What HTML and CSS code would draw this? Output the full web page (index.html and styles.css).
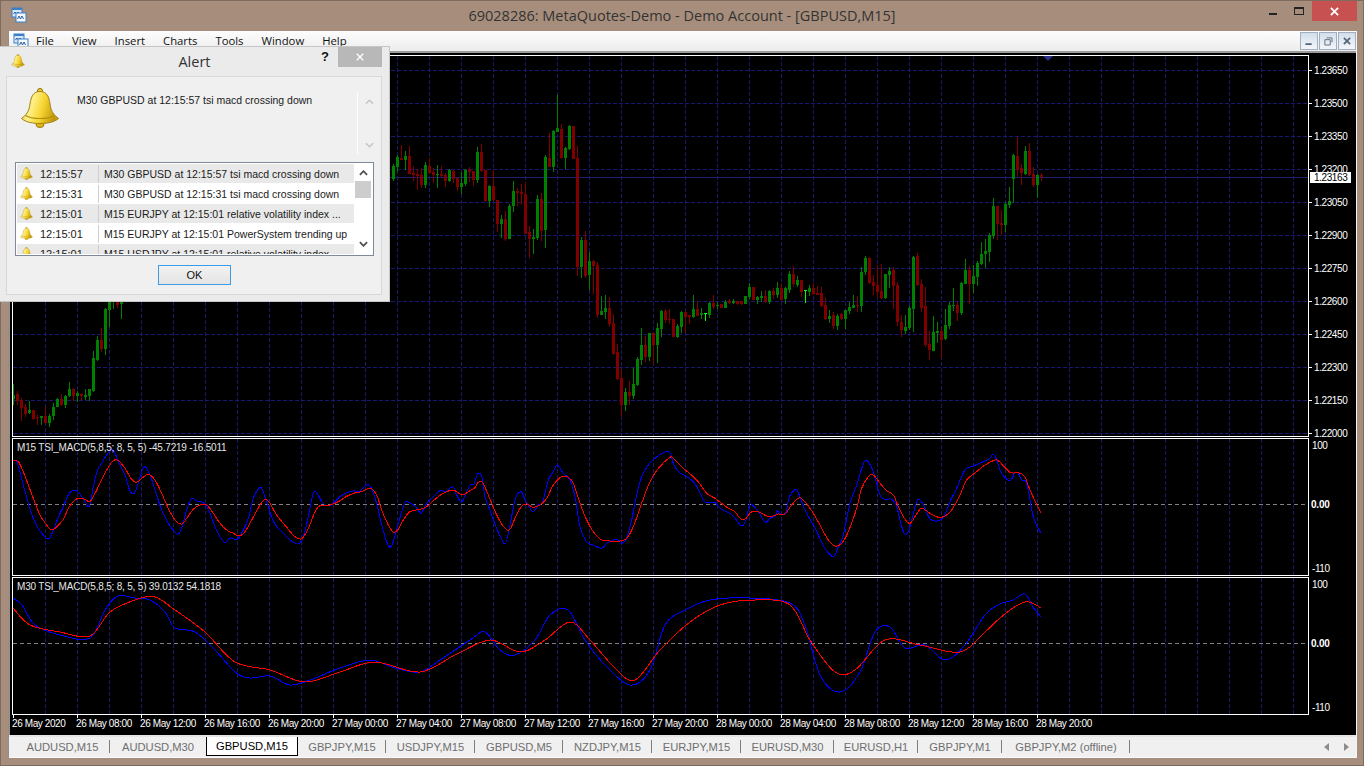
FILE: index.html
```html
<!DOCTYPE html>
<html lang="en">
<head>
<meta charset="utf-8">
<title>69028286: MetaQuotes-Demo - Demo Account - [GBPUSD,M15]</title>
<link rel="stylesheet" href="styles.css">
</head>
<body>
<svg class="defs" width="0" height="0" aria-hidden="true">
  <defs>
    <linearGradient id="gold" x1="0" y1="0" x2="1" y2="0.25">
      <stop offset="0" stop-color="#d8ae14"/>
      <stop offset="0.35" stop-color="#fff08a"/>
      <stop offset="0.65" stop-color="#f6d531"/>
      <stop offset="1" stop-color="#c49a0c"/>
    </linearGradient>
    <symbol id="bell" viewBox="0 0 40 40">
      <ellipse cx="20" cy="36.5" rx="4" ry="3" fill="#e0b418" stroke="#9a7a10"/>
      <circle cx="20" cy="3" r="2.6" fill="#e9c52a" stroke="#9a7a10"/>
      <path d="M20 3.5C13 3.5 11 9 10 16C9 24 6 27 1.5 30.5C6 34.5 14 35.5 20 35.5C26 35.5 34 34.5 38.5 30.5C34 27 31 24 30 16C29 9 27 3.5 20 3.5Z" fill="url(#gold)" stroke="#a3820f"/>
      <path d="M5.5 27.5C12 31.5 28 31.5 34.5 27.5" fill="none" stroke="#b08c10" stroke-width="1.2"/>
    </symbol>
    <symbol id="appicon" viewBox="0 0 16 16">
      <rect x="1" y="1" width="10" height="9" fill="#d7e8f9" stroke="#3b7fc6"/>
      <rect x="1" y="1" width="10" height="2" fill="#3b7fc6"/>
      <path d="M2.5 7l1.5-2 1.5 2 1.5-2 1.5 2" fill="none" stroke="#2b5c94"/>
      <rect x="5" y="6" width="10" height="9" fill="#f4f9fe" stroke="#3b7fc6"/>
      <path d="M6.5 12l1.5-3 1.5 3 1.5-3 1.5 3" fill="none" stroke="#2b5c94"/>
    </symbol>
  </defs>
</svg>

<div class="app">
  <header class="titlebar">
    <svg class="app-icon"><use href="#appicon"/></svg>
    <div class="title">69028286: MetaQuotes-Demo - Demo Account - [GBPUSD,M15]</div>
    <div class="caption">
      <span class="cap-min"></span>
      <span class="cap-max"></span>
      <span class="cap-close"><svg class="cap-x" viewBox="0 0 10 10"><path d="M1 1l8 8M9 1l-8 8"/></svg></span>
    </div>
  </header>

  <div class="mdi">
    <nav class="menu">
      <svg class="menu-icon"><use href="#appicon"/></svg>
      <div class="menu-items">
        <span>File</span><span>View</span><span>Insert</span><span>Charts</span><span>Tools</span><span>Window</span><span>Help</span>
      </div>
      <div class="mdi-btns">
        <span class="mdi-btn"><svg viewBox="0 0 18 18"><path class="ico-fill" d="M5 11.5h7v2H5z"/></svg></span>
        <span class="mdi-btn"><svg viewBox="0 0 18 18"><path class="ico-line" d="M7.5 5.5h6v5M5.5 7.5h6v6h-6z"/></svg></span>
        <span class="mdi-btn"><svg viewBox="0 0 18 18"><path class="ico-x" d="M5.5 5.5l7 7M12.5 5.5l-7 7"/></svg></span>
      </div>
    </nav>

    <main class="chart">
      <section class="pane pane-main">
        <div class="plot">
          <svg class="plot-svg" viewBox="13 56 1295 380">
            <path id="grid-main" class="grid"/>
            <path class="price-line" d="M13 177.5H1308"/>
            <path id="wick-g" class="wick-g"/><path id="wick-r" class="wick-r"/><path id="wick-d" class="wick-d"/>
            <path id="body-g" class="body-g"/><path id="body-r" class="body-r"/><path id="body-d" class="body-d"/>
            <path class="marker" d="M1043 56h10l-5 5z"/>
          </svg>
        </div>
        <svg class="axis" viewBox="1309 55 46 382">
          <path class="tick" d="M1309 70.5h3M1309 103.5h3M1309 136.5h3M1309 169.5h3M1309 202.5h3M1309 235.5h3M1309 268.5h3M1309 301.5h3M1309 334.5h3M1309 367.5h3M1309 400.5h3M1309 433.5h3"/>
          <text class="lbl" x="1314" y="74">1.23650</text>
          <text class="lbl" x="1314" y="107">1.23500</text>
          <text class="lbl" x="1314" y="140">1.23350</text>
          <text class="lbl" x="1314" y="173">1.23200</text>
          <text class="lbl" x="1314" y="206">1.23050</text>
          <text class="lbl" x="1314" y="239">1.22900</text>
          <text class="lbl" x="1314" y="272">1.22750</text>
          <text class="lbl" x="1314" y="305">1.22600</text>
          <text class="lbl" x="1314" y="338">1.22450</text>
          <text class="lbl" x="1314" y="371">1.22300</text>
          <text class="lbl" x="1314" y="404">1.22150</text>
          <text class="lbl" x="1314" y="437">1.22000</text>
          <rect class="price-box" x="1310" y="172" width="41" height="11"/>
          <text class="lbl lbl-dark" x="1314" y="181">1.23163</text>
        </svg>
      </section>

      <section class="pane pane-sub">
        <div class="plot">
          <svg class="plot-svg" viewBox="13 439 1295 136">
            <path id="grid-a" class="grid"/>
            <path class="zero" d="M13 504.5H1308"/>
            <path id="blue-a" class="line-blue"/>
            <path id="red-a" class="line-red"/>
            <text class="lbl lbl-ind" x="17" y="451">M15 TSI_MACD(5,8,5; 8, 5, 5) -45.7219 -16.5011</text>
          </svg>
        </div>
        <svg class="axis" viewBox="1309 438 46 138">
          <text class="lbl" x="1312" y="449">100</text>
          <text class="lbl lbl-bold" x="1311" y="508">0.00</text>
          <text class="lbl" x="1312" y="572">-110</text>
        </svg>
      </section>

      <section class="pane pane-sub">
        <div class="plot">
          <svg class="plot-svg" viewBox="13 578 1295 136">
            <path id="grid-b" class="grid"/>
            <path class="zero" d="M13 643.5H1308"/>
            <path id="blue-b" class="line-blue"/>
            <path id="red-b" class="line-red"/>
            <text class="lbl lbl-ind" x="17" y="590">M30 TSI_MACD(5,8,5; 8, 5, 5) 39.0132 54.1818</text>
          </svg>
        </div>
        <svg class="axis" viewBox="1309 577 46 138">
          <text class="lbl" x="1312" y="588">100</text>
          <text class="lbl lbl-bold" x="1311" y="647">0.00</text>
          <text class="lbl" x="1312" y="711">-110</text>
        </svg>
      </section>

      <svg class="timeaxis" viewBox="10 715 1345 20">
        <path id="time-ticks" class="tick"/>
        <text class="lbl" x="12" y="727">26 May 2020</text>
        <text class="lbl" x="76" y="727">26 May 08:00</text>
        <text class="lbl" x="140" y="727">26 May 12:00</text>
        <text class="lbl" x="204" y="727">26 May 16:00</text>
        <text class="lbl" x="268" y="727">26 May 20:00</text>
        <text class="lbl" x="332" y="727">27 May 00:00</text>
        <text class="lbl" x="396" y="727">27 May 04:00</text>
        <text class="lbl" x="460" y="727">27 May 08:00</text>
        <text class="lbl" x="524" y="727">27 May 12:00</text>
        <text class="lbl" x="588" y="727">27 May 16:00</text>
        <text class="lbl" x="652" y="727">27 May 20:00</text>
        <text class="lbl" x="716" y="727">28 May 00:00</text>
        <text class="lbl" x="780" y="727">28 May 04:00</text>
        <text class="lbl" x="844" y="727">28 May 08:00</text>
        <text class="lbl" x="908" y="727">28 May 12:00</text>
        <text class="lbl" x="972" y="727">28 May 16:00</text>
        <text class="lbl" x="1036" y="727">28 May 20:00</text>
      </svg>
    </main>

    <footer class="tabbar">
      <div class="tabs">
        <span class="tab tab-first">AUDUSD,M15</span>
        <span class="tab tab-before-active">AUDUSD,M30</span>
        <span class="tab tab-active">GBPUSD,M15</span>
        <span class="tab">GBPJPY,M15</span>
        <span class="tab">USDJPY,M15</span>
        <span class="tab">GBPUSD,M5</span>
        <span class="tab">NZDJPY,M15</span>
        <span class="tab">EURJPY,M15</span>
        <span class="tab">EURUSD,M30</span>
        <span class="tab">EURUSD,H1</span>
        <span class="tab">GBPJPY,M1</span>
        <span class="tab">GBPJPY,M2 (offline)</span>
      </div>
      <div class="tab-arrows">
        <svg viewBox="0 0 6 8"><path d="M5 0v8L0 4z"/></svg>
        <svg viewBox="0 0 6 8"><path d="M1 0v8l5-4z"/></svg>
      </div>
    </footer>
  </div>
</div>

<aside class="dialog">
  <div class="dlg-title">
    <svg class="dlg-bell"><use href="#bell"/></svg>
    <div class="dlg-name">Alert</div>
    <div class="dlg-actions">
      <span class="dlg-help">?</span>
      <span class="dlg-close"><svg viewBox="0 0 10 10"><path d="M1 1l8 8M9 1l-8 8"/></svg></span>
    </div>
  </div>
  <div class="dlg-panel">
    <div class="dlg-msg">
      <svg class="big-bell"><use href="#bell"/></svg>
      <p class="msg-text">M30 GBPUSD at 12:15:57 tsi macd crossing down</p>
      <div class="msg-scroll">
        <svg viewBox="0 0 10 6"><path d="M1 5l4-4 4 4"/></svg>
        <svg viewBox="0 0 10 6"><path d="M1 1l4 4 4-4"/></svg>
      </div>
    </div>
    <div class="list">
      <div class="rows">
        <div class="row"><span class="cell-time"><svg class="row-bell"><use href="#bell"/></svg>12:15:57</span><span class="cell-msg">M30 GBPUSD at 12:15:57 tsi macd crossing down</span></div>
        <div class="row"><span class="cell-time"><svg class="row-bell"><use href="#bell"/></svg>12:15:31</span><span class="cell-msg">M30 GBPUSD at 12:15:31 tsi macd crossing down</span></div>
        <div class="row"><span class="cell-time"><svg class="row-bell"><use href="#bell"/></svg>12:15:01</span><span class="cell-msg">M15 EURJPY at 12:15:01 relative volatility index ...</span></div>
        <div class="row"><span class="cell-time"><svg class="row-bell"><use href="#bell"/></svg>12:15:01</span><span class="cell-msg">M15 EURJPY at 12:15:01 PowerSystem trending up</span></div>
        <div class="row"><span class="cell-time"><svg class="row-bell"><use href="#bell"/></svg>12:15:01</span><span class="cell-msg">M15 USDJPY at 12:15:01 relative volatility index ...</span></div>
      </div>
      <div class="list-scroll">
        <svg class="chev" viewBox="0 0 10 6"><path d="M1 5l4-4 4 4"/></svg>
        <span class="thumb"></span>
        <svg class="chev chev-down" viewBox="0 0 10 6"><path d="M1 1l4 4 4-4"/></svg>
      </div>
    </div>
    <div class="dlg-foot"><button class="ok" type="button">OK</button></div>
  </div>
</aside>

<script src="script.js"></script>
</body>
</html>
```

FILE: styles.css
```css
* { box-sizing: border-box; }
html, body { margin: 0; padding: 0; width: 1364px; height: 766px; overflow: hidden; }
body { font-family: "Liberation Sans", Arial, sans-serif; background: #a78e7c; position: relative; }
.defs { position: absolute; }

.app {
  width: 1364px; height: 766px; display: flex; flex-direction: column;
  background: #a78e7c; border: 1px solid #7e6b5e; padding: 0 7px 7px;
}

/* title bar */
.titlebar { height: 30px; display: grid; grid-template-columns: 1fr auto 1fr; align-items: center; margin: 0 -7px; position: relative; }
.app-icon { width: 16px; height: 16px; margin: -2px 0 0 10px; }
.title { font-family: "Open Sans", sans-serif; font-size: 14.5px; color: #333; line-height: 30px; margin-top: -1px; }
.caption { justify-self: end; align-self: start; display: flex; align-items: flex-start; padding-right: 6px; }
.cap-min { width: 8px; height: 2px; background: #222; margin: 12px 17px 0 0; }
.cap-max { width: 10px; height: 8px; border: 1px solid #222; border-top-width: 2px; margin: 6px 8px 0 0; }
.cap-close { width: 45px; height: 20px; background: #c75050; display: flex; align-items: center; justify-content: center; }
.cap-x { width: 9px; height: 9px; fill: none; stroke: #fff; stroke-width: 2; }

/* MDI client */
.mdi { flex: 1; display: flex; flex-direction: column; min-height: 0; border-left: 1px solid #8f8f8f; border-right: 1px solid #f4f4f4; width: 1349px; }
.menu {
  height: 22px; flex: none; display: flex; align-items: flex-start;
  background: linear-gradient(#fdfdfd, #eeeeee 90%); border-bottom: 2px solid #9a9a9a;
}
.menu-icon { width: 16px; height: 16px; margin: 2px 0 0 4px; flex: none; }
.menu-items { display: flex; gap: 18px; margin-left: 7px; font-family: "Open Sans", sans-serif; font-size: 11.3px; color: #111; line-height: 20px; padding-top: 0; }
.mdi-btns { margin-left: auto; display: flex; gap: 1px; margin-top: 1px; margin-right: 0; }
.mdi-btn { width: 18px; height: 18px; border: 1px solid #a0b0c2; background: linear-gradient(#d3deeb, #f3f6fa); display: block; }
.mdi-btn svg { display: block; width: 16px; height: 16px; }
.ico-fill { fill: #55657a; }
.ico-line { fill: none; stroke: #55657a; stroke-width: 1; }
.ico-x { fill: none; stroke: #55657a; stroke-width: 2; }

/* chart */
.chart { height: 682px; flex: none; background: #000; padding: 2px 0 0 1px; display: flex; flex-direction: column; margin-left: 1px; }
.pane { display: flex; margin-left: 1px; margin-bottom: 1px; flex: none; }
.pane-main { height: 382px; }
.pane-sub { height: 138px; }
.plot { width: 1297px; height: 100%; border: 1px solid #fff; flex: none; overflow: hidden; }
.plot-svg { display: block; width: 100%; height: 100%; }
.axis { width: 46px; height: 100%; flex: none; display: block; overflow: visible; }
.timeaxis { display: block; width: 1345px; height: 20px; margin: -1px 0 0 -1px; flex: none; }

.grid { fill: none; stroke: #191970; stroke-width: 1; stroke-dasharray: 4 2; shape-rendering: crispEdges; }
.price-line { fill: none; stroke: #20206e; stroke-width: 1; shape-rendering: crispEdges; }
.zero { fill: none; stroke: #808080; stroke-width: 1; stroke-dasharray: 4 3; shape-rendering: crispEdges; }
.wick-g, .wick-r, .wick-d { fill: none; stroke-width: 1; shape-rendering: crispEdges; }
.wick-g { stroke: #008000; }
.wick-r { stroke: #800000; }
.wick-d { stroke: #00ff00; }
.body-g, .body-r, .body-d { shape-rendering: crispEdges; }
.body-g { fill: #008000; }
.body-r { fill: #800000; }
.body-d { fill: #00ff00; }
.marker { fill: #2a2a8a; }
.line-blue, .line-red { fill: none; stroke-width: 1; shape-rendering: crispEdges; stroke-linejoin: round; }
.line-blue { stroke: #0000ff; }
.line-red { stroke: #ff0000; }
.tick { fill: none; stroke: #fff; stroke-width: 1; shape-rendering: crispEdges; }
.lbl { font-family: "Liberation Sans", Arial, sans-serif; font-size: 10px; letter-spacing: -0.4px; fill: #fff; }
.lbl-dark { fill: #000; }
.lbl-bold { font-weight: bold; letter-spacing: -0.2px; }
.lbl-ind { fill: #e6e6e6; letter-spacing: -0.2px; }
.price-box { fill: #fff; }

/* tabs */
.tabbar { flex: 1; display: flex; align-items: flex-start; background: #f0f0f0; border-top: 2px solid #e4e4e4; border-bottom: 1px solid #fafafa; padding-left: 1px; }
.tabs { display: grid; grid-template-columns: 100px 96px 92px 88px 89px 88px 89px 89px 93px 84px 84px 128px; height: 19px; }
.tab { font-size: 11.2px; color: #6f6f6f; display: flex; align-items: center; justify-content: center; position: relative; height: 19px; white-space: nowrap; padding-top: 1px; }
.tab-first { padding-left: 5px; }
.tab::after { content: ""; position: absolute; right: 0; top: 3px; height: 13px; width: 1px; background: #7d7d7d; }
.tab-before-active::after, .tab-active::after { display: none; }
.tab-active { background: #fff; color: #000; border: 1px solid #000; border-top: 0; padding-top: 0; }
.tab-arrows { margin-left: auto; display: flex; gap: 13px; padding: 6px 7px 0 0; }
.tab-arrows svg { width: 6px; height: 8px; display: block; fill: #8c8c8c; }

/* alert dialog */
.dialog {
  position: absolute; left: -1px; top: 46px; width: 391px; height: 256px;
  background: #ebebeb; border: 1px solid #c6c6c6; display: flex; flex-direction: column;
}
.dlg-title { height: 29px; flex: none; display: grid; grid-template-columns: 1fr auto 1fr; align-items: start; }
.dlg-bell { width: 14px; height: 14px; margin: 7px 0 0 11px; }
.dlg-name { font-family: "Open Sans", sans-serif; font-size: 14.5px; color: #333; line-height: 30px; }
.dlg-actions { justify-self: end; display: flex; align-items: flex-start; padding-right: 7px; }
.dlg-help { font-family: "Liberation Sans", sans-serif; font-weight: bold; font-size: 13px; color: #111; margin: 2px 9px 0 0; line-height: 16px; }
.dlg-close { width: 44px; height: 20px; background: #b8b8b8; display: flex; align-items: center; justify-content: center; }
.dlg-close svg { width: 8px; height: 8px; fill: none; stroke: #fff; stroke-width: 1.6; }
.dlg-panel { flex: 1; margin: 0 7px 6px 6px; border: 1px solid #d8d8d8; background: #f0f0f0; display: flex; flex-direction: column; min-height: 0; }
.dlg-msg { height: 85px; flex: none; display: flex; position: relative; }
.big-bell { width: 40px; height: 40px; margin: 11px 0 0 13px; flex: none; }
.msg-text { font-size: 10.5px; color: #1a1a1a; margin: 17px 0 0 17px; line-height: 13px; flex: 1; }
.msg-scroll { width: 24px; height: 61px; margin: 16px 0 0 0; border-left: 1px solid #fff; display: flex; flex-direction: column; justify-content: space-between; align-items: center; padding: 6px 0 6px 0; flex: none; }
.msg-scroll svg { width: 9px; height: 6px; fill: none; stroke: #c4c4c4; stroke-width: 1.6; }

.list { height: 94px; flex: none; margin: 0 7px 0 8px; border: 1px solid #7f8a99; background: #fff; display: flex; padding: 1px; overflow: hidden; }
.rows { flex: 1; overflow: hidden; display: flex; flex-direction: column; }
.row { height: 20px; flex: none; display: flex; align-items: stretch; font-size: 10.5px; color: #1a1a1a; border-bottom: 1px solid #fff; line-height: 19px; white-space: nowrap; padding-top: 1px; }
.row:nth-child(odd) { background: #e9e9e9; }
.cell-time { width: 82px; flex: none; display: flex; align-items: center; padding-left: 3px; gap: 7px; border-right: 1px solid #cfcfcf; font-size: 11px; }
.row-bell { width: 13px; height: 13px; flex: none; margin-top: -1px; }
.cell-msg { padding-left: 5px; overflow: hidden; }
.list-scroll { width: 18px; flex: none; background: #fff; display: flex; flex-direction: column; align-items: center; padding-top: 6px; position: relative; }
.chev { width: 9px; height: 6px; fill: none; stroke: #505050; stroke-width: 2; flex: none; }
.thumb { width: 16px; height: 17px; background: #cdcdcd; margin-top: 5px; flex: none; }
.chev-down { margin-top: auto; margin-bottom: 7px; }
.dlg-foot { flex: 1; display: flex; justify-content: center; align-items: flex-start; padding: 9px 0 0 1px; }
.ok { width: 73px; height: 20px; border: 1px solid #3c9be6; background: linear-gradient(#f2f2f2, #e4e4e4); font-family: "Liberation Sans", sans-serif; font-size: 11px; color: #111; padding: 0; }
```

FILE: script.js
```js
(function () {
  // Candle data read per chart section: [first x, y origin, "type body-top body-bottom wick-top wick-bottom", ...]
  // values are thirds of a pixel relative to the y origin
  var sets = [
    [13, 300, "g284 298 252 315,r282 303 273 315,r300 323 295 363,r321 342 312 351,g330 339 303 342,r330 357 330 360,r351 353 345 375,g348 354 348 375,r348 369 321 372,g348 369 342 381,g321 348 309 360,g297 321 294 321,r297 315 282 318,g288 315 285 324,g267 288 246 290,r267 288 264 303,g279 288 273 306,r282 288 279 300,g285 291 267 300,g267 288 267 303,g174 273 153 276,g120 180 108 183,r120 147 84 156,g27 147 24 165,g0 30 0 81,g0 6 0 27,r0 15 0 24,g0 12 0 57"],
    [393, 90, "g228 267 222 273,g201 231 195 245,r204 210 165 210,g198 210 183 240,r198 252 168 252,r249 255 228 273,r252 258 237 300,r255 285 234 294,g225 285 216 294,r228 249 204 252,r246 255 234 279,g252 255 225 294,r252 258 228 261,r255 273 249 291,g240 273 237 276,r243 267 240 279,r264 291 264 303,g279 291 246 312,g240 282 237 288,r237 246 231 276,r243 270 243 288,g186 270 171 279,r186 243 162 246,r240 333 240 336,g288 333 285 351,r288 330 240 333,r330 402 330 426,g387 402 375 444,r387 447 363 453,g348 447 342 447,g303 348 273 366,r303 309 294 348,r306 312 282 345,r312 432 276 432,r426 447 408 504,g441 447 417 492,g327 444 315 450,r327 423 309 453,g201 420 195 474,r204 231 129 231,g123 231 120 246,g114 126 15 126,r117 204 102 207,g174 204 171 237,g108 177 105 180,r108 207 108 207,r204 531 168 558,g450 531 441 564,r450 558 423 564,g513 555 486 600"],
    [593, 240, "r63 78 60 162,r75 225 66 234,g213 225 168 225,g204 216 165 237,r204 252 171 261,r249 342 222 345,r336 418 312 420,r414 495 387 531,g456 495 444 513,r456 468 423 495,g432 468 384 477,g357 435 351 438,g315 360 264 375,r315 351 288 366,g279 351 279 363,r279 315 279 372,g264 315 249 369,g213 267 210 291,r213 240 207 249,r237 240 207 252,r237 291 237 291,g258 291 252 294,g216 261 213 279,r216 231 213 279,r225 231 225 252,g207 231 165 234,r207 228 183 228,g219 225 204 237,d220 222 219 243,g189 225 186 234,r189 201 165 207,g195 197 186 207,r192 204 192 204,g186 204 180 204,r183 189 177 192,g183 189 177 192,r183 192 183 195,r183 192 183 195,g168 192 168 192,g141 171 129 177,r141 180 141 180,g171 180 168 192,g168 174 153 186,r168 186 150 189,g153 186 150 192,r153 165 144 177,g144 165 126 174,r144 180 129 183,g144 177 141 192,g102 150 93 159,r102 132 78 141,g120 135 108 141,r120 156 120 171,d150 152 150 189,g144 156 135 168,r144 162 129 165,r159 165 138 165"],
    [821, 130, "r489 528 471 531,r525 567 504 570,g558 567 540 579,r555 588 546 597,g558 588 552 600,r552 567 549 570,g540 567 540 597,g531 543 516 552,g525 534 495 534,r525 527 498 546,g426 528 411 546,g384 426 378 435,r384 459 381 462,r456 468 435 495,r465 486 405 504,r483 504 402 507,g432 504 432 507,g423 435 411 474,r420 468 411 537,r465 576 456 588,r576 600 555 621,g591 603 555 612,g534 594 528 600,g381 537 378 606,r378 465 369 468,r462 534 447 546,r528 645 471 651,r642 660 603 690,g606 663 558 663,g603 609 576 639,r603 630 591 684,g585 627 537 630,g525 588 516 597,g525 527 474 543,r525 549 516 573,g459 549 456 555,g420 462 387 462,r420 462 408 522,g438 462 405 489,g399 441 393 468,g372 402 336 405,g363 372 327 414,g315 366 309 396,g228 318 204 327,r228 282 228 330,r279 285 240 315,g222 285 216 306,g213 225 171 234,g75 147 72 219,r78 120 21 141,r114 129 102 165,g63 132 48 135,r63 135 39 138,r132 165 111 171,g135 165 132 204,r135 141 129 153"]
  ];
  var wick = { g: "", r: "", d: "" }, body = { g: "", r: "", d: "" };
  sets.forEach(function (s) {
    s[2].split(",").forEach(function (e, i) {
      var k = e.charAt(0), v = e.slice(1).split(" ").map(Number), x = s[0] + 4 * i;
      var yy = function (n) { return Math.round(s[1] + n / 3); };
      var t = yy(v[0]), b = Math.max(yy(v[1]), t + 1), h = yy(v[2]), l = yy(v[3]);
      wick[k] += "M" + (x + 0.5) + " " + h + "V" + Math.max(l, h + 1);
      body[k] += "M" + (x - 1) + " " + t + "H" + (x + 2) + "V" + b + "H" + (x - 1) + "Z";
    });
  });
  ["g", "r", "d"].forEach(function (k) {
    document.getElementById("wick-" + k).setAttribute("d", wick[k]);
    document.getElementById("body-" + k).setAttribute("d", body[k]);
  });

  // Grids
  var verticals = function (top, bottom) {
    var d = "";
    for (var x = 45; x <= 1293; x += 32) d += "M" + (x + 0.5) + " " + top + "V" + bottom;
    return d;
  };
  var h = "";
  for (var y = 70; y <= 433; y += 33) h += "M13 " + (y + 0.5) + "H1308";
  document.getElementById("grid-main").setAttribute("d", h + verticals(56, 436));
  document.getElementById("grid-a").setAttribute("d", verticals(439, 575));
  document.getElementById("grid-b").setAttribute("d", verticals(578, 714));
  var tt = "";
  for (var tx = 13; tx <= 1037; tx += 64) tt += "M" + (tx + 0.5) + " 715V718";
  document.getElementById("time-ticks").setAttribute("d", tt);

  // Indicator traces: [x origin, y origin, pairs in thirds of a pixel]
  function trace(parts) {
    var pts = [];
    parts.forEach(function (p) {
      for (var i = 0; i < p[2].length; i += 2) {
        var x = p[0] + p[2][i] / 3, y = p[1] + p[2][i + 1] / 3;
        if (!pts.length || x > pts[pts.length - 1][0]) pts.push([x, y]);
      }
    });
    return pts;
  }
  function curve(pts) {
    var d = "M" + pts[0][0].toFixed(1) + " " + pts[0][1].toFixed(1);
    for (var i = 0; i < pts.length - 1; i++) {
      var p0 = pts[Math.max(i - 1, 0)], p1 = pts[i], p2 = pts[i + 1], p3 = pts[Math.min(i + 2, pts.length - 1)];
      d += "C" + (p1[0] + (p2[0] - p0[0]) / 6).toFixed(1) + " " + (p1[1] + (p2[1] - p0[1]) / 6).toFixed(1) + " " +
        (p2[0] - (p3[0] - p1[0]) / 6).toFixed(1) + " " + (p2[1] - (p3[1] - p1[1]) / 6).toFixed(1) + " " +
        p2[0].toFixed(1) + " " + p2[1].toFixed(1);
    }
    return d;
  }
  var blueA = trace([
    [0, 430, [40,92,50,95,60,125,70,165,85,220,100,265,115,295,130,315,140,325,150,325,160,300,175,262,190,230,205,195,215,183,228,181,238,190,255,215,268,228,280,170,292,122,305,100,320,75,335,58,345,70,360,105,375,135,388,178,400,192,410,175,425,125,435,110,450,135,465,180,485,240,505,280,520,300,533,313,545,295,560,240,575,205,590,213,610,218,625,238,645,290,660,320,675,338,690,324,712,328,730,300,745,265,760,205,775,177,785,175,800,215,815,262,830,290,850,310,870,330,895,342,910,320,925,260,940,190,950,188,965,215,975,225,990,227,1005,215,1020,200]],
    [340, 440, [0,165,20,158,40,153,60,153,75,138,90,137,105,175,115,210,125,255,140,305,150,322,160,305,175,250,190,200,198,184,215,192,230,202,243,220,260,190,280,170,300,152,318,155,338,140,350,165,365,187,380,155,392,133,402,133,412,103,425,108,435,170,450,210,470,265,495,312,510,255,525,180,543,155,555,180,570,205,580,215,595,195,608,185,625,120,640,95,652,75,670,100,690,120,705,170,720,260,740,305,760,315,785,325,800,310,820,300,835,300,845,310,860,295,875,240,890,165,905,110,925,75,945,55,970,38,990,38,1000,70,1015,95,1040,110,1060,125,1080,158]],
    [690, 440, [45,187,75,188,90,205,110,215,130,228,155,258,170,235,180,192,205,215,225,247,240,235,255,228,263,212,275,225,288,215,298,170,312,152,322,152,345,210,370,255,385,285,405,325,430,350,445,320,460,285,480,190,500,135,515,85,525,62,535,65,550,95,570,165,585,178,605,178,620,200,635,260,648,285,660,260,680,185,692,182,705,205,720,237,740,243,760,232,780,185,800,145,825,90,850,78,880,65,900,55,910,42,920,60,935,100,960,122,975,98,985,100,995,120,1010,130,1030,230,1052,278]]
  ]);
  var redA = trace([
    [0, 430, [40,92,55,95,70,125,85,165,100,205,120,255,140,285,150,297,165,295,190,268,205,235,225,210,240,204,255,208,270,215,285,190,300,160,320,120,340,92,355,92,375,115,395,148,410,157,425,145,445,133,465,150,485,190,505,235,525,270,545,282,560,265,580,238,600,225,620,225,640,250,660,280,680,300,700,310,718,318,735,305,755,270,780,225,795,208,810,220,830,255,860,292,885,320,905,326,925,295,945,245,960,227,980,227,1000,222,1020,212]],
    [340, 440, [0,185,15,172,40,160,65,155,90,145,110,165,125,210,145,255,160,276,175,268,190,240,210,215,240,208,260,200,285,178,310,160,340,150,365,165,385,155,405,143,415,127,428,128,445,165,470,225,495,265,510,268,525,235,545,198,560,192,580,202,600,195,620,175,640,135,665,110,685,112,700,130,720,190,740,240,760,275,785,300,810,303,840,303,860,295,880,260,905,190,930,125,955,85,990,52,1000,55,1030,85,1060,110,1080,132]],
    [690, 440, [50,160,75,175,95,190,115,205,135,215,150,235,165,238,185,215,205,215,230,228,250,228,265,222,285,222,305,195,325,175,340,180,370,220,395,265,415,300,435,318,455,310,475,275,500,205,515,145,535,110,550,105,570,130,590,152,610,165,625,200,645,238,660,250,680,222,695,205,720,220,745,232,765,228,785,210,810,165,830,120,860,95,885,75,910,62,925,62,960,97,985,98,1005,110,1020,150,1053,220]]
  ]);
  var blueB = trace([[0, 0, [39,1794,66,1815,105,1875,180,1905,270,1914,315,1830,354,1788,405,1794,450,1800,495,1836,525,1884,585,1896,645,1950,705,2016,750,2034,810,2028,870,2055,930,2040,1020,2004,1110,1980,1185,2004,1260,2016,1320,1980,1410,1920,1455,1896,1500,1950,1545,1965,1605,1920,1650,1845,1704,1830,1755,1920,1815,1995,1890,2055,1950,2010,1995,1875,2055,1830,2130,1800,2250,1794,2370,1809,2415,1875,2460,2025,2520,2076,2580,2016,2625,1896,2670,1881,2715,1944,2775,1935,2835,1980,2895,1935,2955,1845,3000,1812,3039,1800,3075,1782,3099,1821,3123,1851]]]);
  var redB = trace([[0, 0, [39,1824,90,1875,180,1896,270,1908,330,1836,405,1800,465,1791,525,1830,615,1896,705,1986,810,2010,915,2046,1020,2016,1125,1986,1260,2016,1365,1965,1470,1920,1560,1956,1635,1920,1710,1866,1770,1920,1845,2004,1905,2040,1980,1950,2070,1866,2160,1815,2265,1800,2370,1815,2430,1920,2505,2016,2565,2010,2655,1920,2760,1935,2880,1956,2955,1896,3000,1854,3039,1824,3075,1806,3096,1809,3123,1824]]]);
  document.getElementById("blue-a").setAttribute("d", curve(blueA));
  document.getElementById("red-a").setAttribute("d", curve(redA));
  document.getElementById("blue-b").setAttribute("d", curve(blueB));
  document.getElementById("red-b").setAttribute("d", curve(redB));
})();
```
